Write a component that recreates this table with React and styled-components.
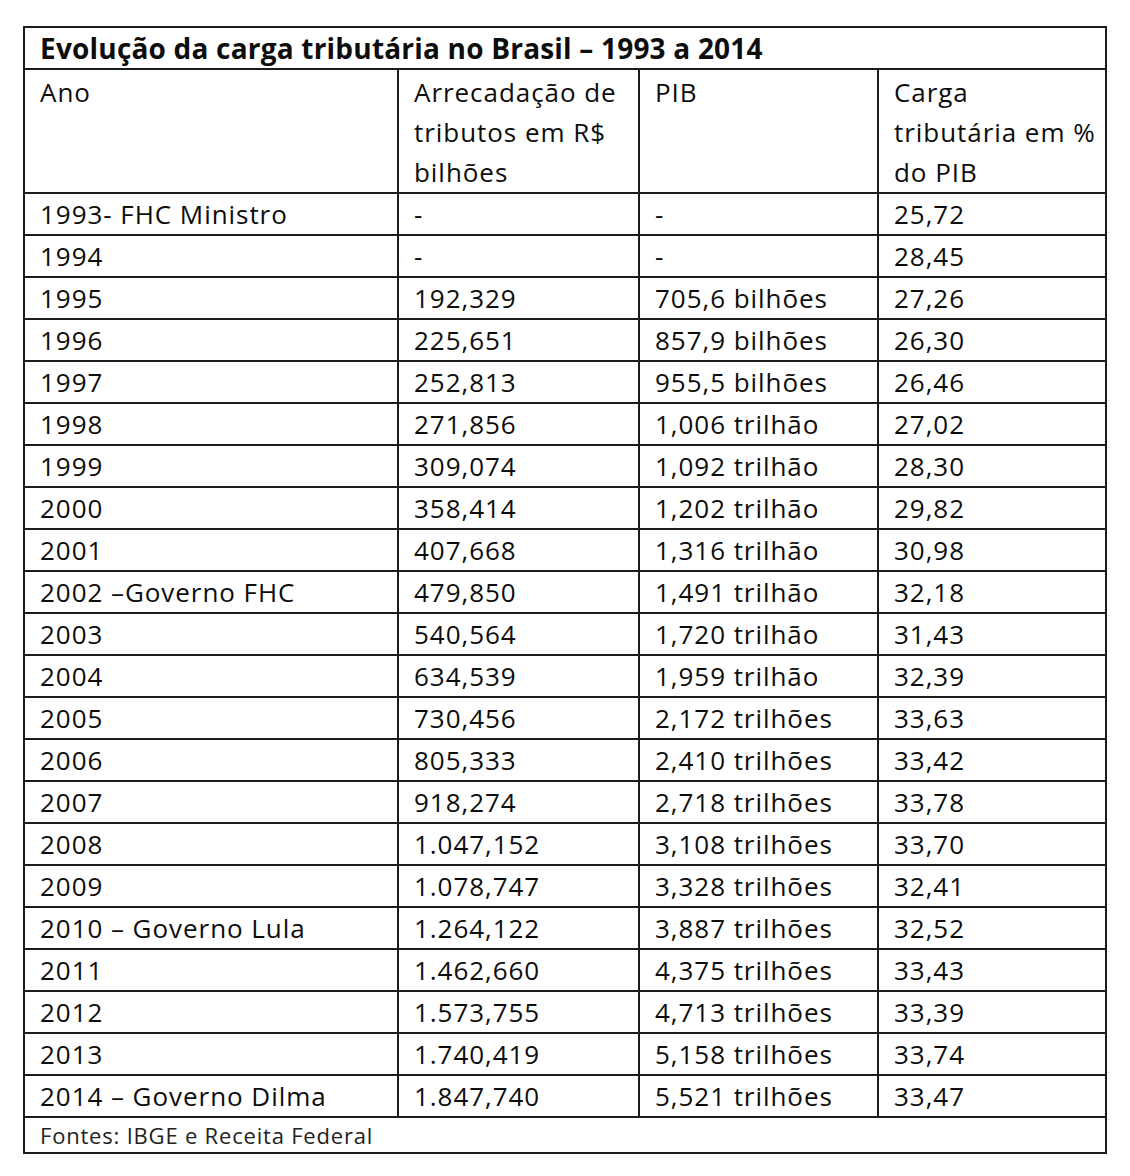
import React from 'react';
import styled, { createGlobalStyle } from 'styled-components';

const GlobalStyle = createGlobalStyle`
  html, body {
    margin: 0;
    padding: 0;
    background: #fff;
  }
`;

const Page = styled.div`
  width: 1130px;
  height: 1176px;
  padding: 26px 0 0 23px;
  box-sizing: border-box;
  font-family: "Open Sans", "Noto Sans", sans-serif;
  color: #0d0d0d;
`;

const Table = styled.table`
  width: 1082px;
  border-collapse: collapse;
  border: 2px solid #1c1c1c;
  table-layout: fixed;
`;

const Cell = styled.td`
  border: 2px solid #1c1c1c;
  padding: 0 0 0 15px;
  height: 38.14px;
  font-size: 26px;
  letter-spacing: 0.95px;
  line-height: 40px;
  vertical-align: middle;
  white-space: nowrap;
`;

const TitleCell = styled(Cell)`
  font-weight: 700;
  font-size: 28px;
  height: 40px;
  line-height: 40px;
  letter-spacing: 0.2px;
`;

const HeadCell = styled(Cell)`
  vertical-align: top;
  padding-top: 2px;
  padding-bottom: 0;
`;

const FootCell = styled(Cell)`
  font-size: 22px;
  height: 34px;
  line-height: 34px;
  letter-spacing: 0.8px;
  color: #222;
`;

const rows = [
  ['1993- FHC Ministro', '-', '-', '25,72'],
  ['1994', '-', '-', '28,45'],
  ['1995', '192,329', '705,6 bilhões', '27,26'],
  ['1996', '225,651', '857,9 bilhões', '26,30'],
  ['1997', '252,813', '955,5 bilhões', '26,46'],
  ['1998', '271,856', '1,006 trilhão', '27,02'],
  ['1999', '309,074', '1,092 trilhão', '28,30'],
  ['2000', '358,414', '1,202 trilhão', '29,82'],
  ['2001', '407,668', '1,316 trilhão', '30,98'],
  ['2002 –Governo FHC', '479,850', '1,491 trilhão', '32,18'],
  ['2003', '540,564', '1,720 trilhão', '31,43'],
  ['2004', '634,539', '1,959 trilhão', '32,39'],
  ['2005', '730,456', '2,172 trilhões', '33,63'],
  ['2006', '805,333', '2,410 trilhões', '33,42'],
  ['2007', '918,274', '2,718 trilhões', '33,78'],
  ['2008', '1.047,152', '3,108 trilhões', '33,70'],
  ['2009', '1.078,747', '3,328 trilhões', '32,41'],
  ['2010 – Governo Lula', '1.264,122', '3,887 trilhões', '32,52'],
  ['2011', '1.462,660', '4,375 trilhões', '33,43'],
  ['2012', '1.573,755', '4,713 trilhões', '33,39'],
  ['2013', '1.740,419', '5,158 trilhões', '33,74'],
  ['2014 – Governo Dilma', '1.847,740', '5,521 trilhões', '33,47'],
];

export default function App() {
  return (
    <>
      <GlobalStyle />
      <Page>
        <Table>
          <colgroup>
            <col style={{ width: 374 }} />
            <col style={{ width: 241 }} />
            <col style={{ width: 239 }} />
            <col style={{ width: 228 }} />
          </colgroup>
          <tbody>
            <tr>
              <TitleCell colSpan={4}>Evolução da carga tributária no Brasil – 1993 a 2014</TitleCell>
            </tr>
            <tr>
              <HeadCell>Ano</HeadCell>
              <HeadCell>Arrecadação de<br />tributos em R$<br />bilhões</HeadCell>
              <HeadCell>PIB</HeadCell>
              <HeadCell>Carga<br />tributária em %<br />do PIB</HeadCell>
            </tr>
            {rows.map((r) => (
              <tr key={r[0]}>
                {r.map((v, i) => (
                  <Cell key={i}>{v}</Cell>
                ))}
              </tr>
            ))}
            <tr>
              <FootCell colSpan={4}>Fontes: IBGE e Receita Federal</FootCell>
            </tr>
          </tbody>
        </Table>
      </Page>
    </>
  );
}
